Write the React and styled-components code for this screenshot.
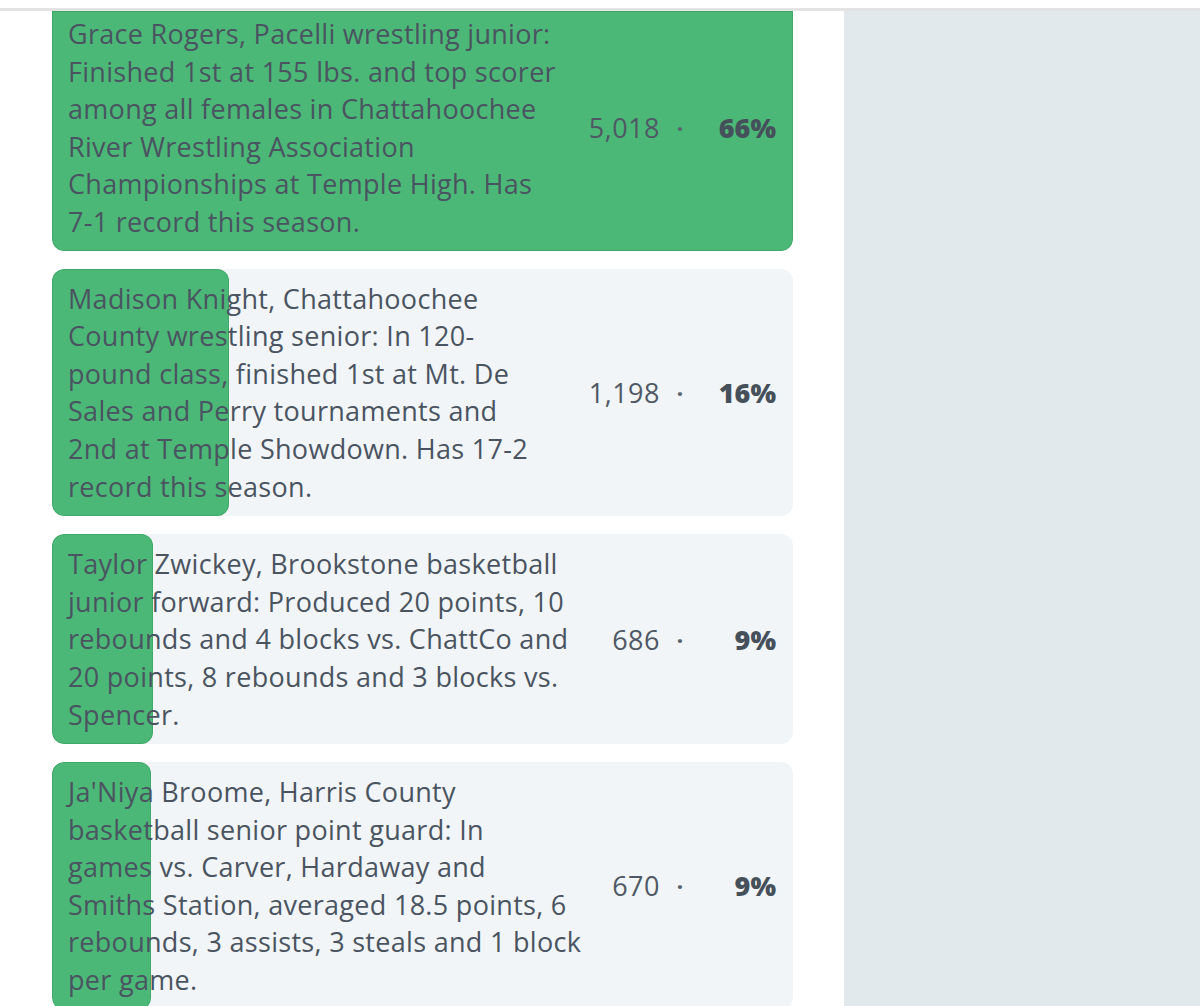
import React from "react";
import styled, { createGlobalStyle } from "styled-components";

const GlobalStyle = createGlobalStyle`
  html, body {
    margin: 0;
    padding: 0;
    background: #ffffff;
    font-family: "Open Sans", "Noto Sans", sans-serif;
  }
`;

const Page = styled.div`
  height: 1006px;
  overflow: hidden;
  display: flex;
  flex-direction: column;
`;

const TopRule = styled.div`
  height: 8px;
  border-bottom: 3px solid #e3e3e3;
  flex: none;
`;

const Layout = styled.div`
  flex: 1;
  display: grid;
  grid-template-columns: 844px 1fr;
  min-height: 0;
`;

const PollColumn = styled.section`
  padding: 0 51px 0 52px;
  display: flex;
  flex-direction: column;
  gap: 18px;
`;

const Sidebar = styled.aside`
  background: #e2e9ec;
`;

const Choice = styled.div`
  position: relative;
  display: flex;
  align-items: center;
  background: #f1f5f7;
  border-radius: ${(p) => (p.$clipped ? "0 0 12px 12px" : "12px")};
  padding: ${(p) => (p.$clipped ? "4px 17px 10px 16px" : "11px 17px 11px 16px")};
  overflow: hidden;
`;

const Fill = styled.div`
  position: absolute;
  left: 0;
  top: 0;
  bottom: 0;
  background: #4cb877;
  border-radius: ${(p) => (p.$clipped ? "0 0 12px 12px" : "12px")};
  box-shadow: inset 0 0 0 1px rgba(40, 140, 80, 0.35);
`;

const Label = styled.div`
  position: relative;
  flex: 1;
  font-size: 27px;
  line-height: 37.6px;
  letter-spacing: 0.3px;
  color: #4a5461;
`;

const Line = styled.span`
  display: block;
  white-space: nowrap;
`;

const Stats = styled.div`
  position: relative;
  display: grid;
  grid-template-columns: auto 40px 76px;
  align-items: center;
  font-size: 27px;
  color: #4f5965;
`;

const Count = styled.span`
  text-align: right;
  letter-spacing: 0.5px;
`;

const Dot = styled.span`
  text-align: center;
  font-size: 24px;
  font-weight: 700;
  color: #59636e;
`;

const Percent = styled.span`
  text-align: right;
  font-weight: 800;
  color: #46505b;
`;

const choices = [
  {
    lines: [
      "Grace Rogers, Pacelli wrestling junior:",
      "Finished 1st at 155 lbs. and top scorer",
      "among all females in Chattahoochee",
      "River Wrestling Association",
      "Championships at Temple High. Has",
      "7-1 record this season.",
    ],
    votes: 5018,
    pct: 66,
  },
  {
    lines: [
      "Madison Knight, Chattahoochee",
      "County wrestling senior: In 120-",
      "pound class, finished 1st at Mt. De",
      "Sales and Perry tournaments and",
      "2nd at Temple Showdown. Has 17-2",
      "record this season.",
    ],
    votes: 1198,
    pct: 16,
  },
  {
    lines: [
      "Taylor Zwickey, Brookstone basketball",
      "junior forward: Produced 20 points, 10",
      "rebounds and 4 blocks vs. ChattCo and",
      "20 points, 8 rebounds and 3 blocks vs.",
      "Spencer.",
    ],
    votes: 686,
    pct: 9,
  },
  {
    lines: [
      "Ja'Niya Broome, Harris County",
      "basketball senior point guard: In",
      "games vs. Carver, Hardaway and",
      "Smiths Station, averaged 18.5 points, 6",
      "rebounds, 3 assists, 3 steals and 1 block",
      "per game.",
    ],
    votes: 670,
    pct: 9,
  },
];

const maxVotes = Math.max(...choices.map((c) => c.votes));

export default function App() {
  return (
    <>
      <GlobalStyle />
      <Page>
        <TopRule />
        <Layout>
          <PollColumn>
            {choices.map((c, i) => (
              <Choice key={i} $clipped={i === 0}>
                <Fill
                  $clipped={i === 0}
                  style={{ width: `${(c.votes / maxVotes) * 100}%` }}
                />
                <Label>
                  {c.lines.map((l, j) => (
                    <Line key={j}>{l}</Line>
                  ))}
                </Label>
                <Stats>
                  <Count>{c.votes.toLocaleString("en-US")}</Count>
                  <Dot>·</Dot>
                  <Percent>{c.pct}%</Percent>
                </Stats>
              </Choice>
            ))}
          </PollColumn>
          <Sidebar />
        </Layout>
      </Page>
    </>
  );
}
